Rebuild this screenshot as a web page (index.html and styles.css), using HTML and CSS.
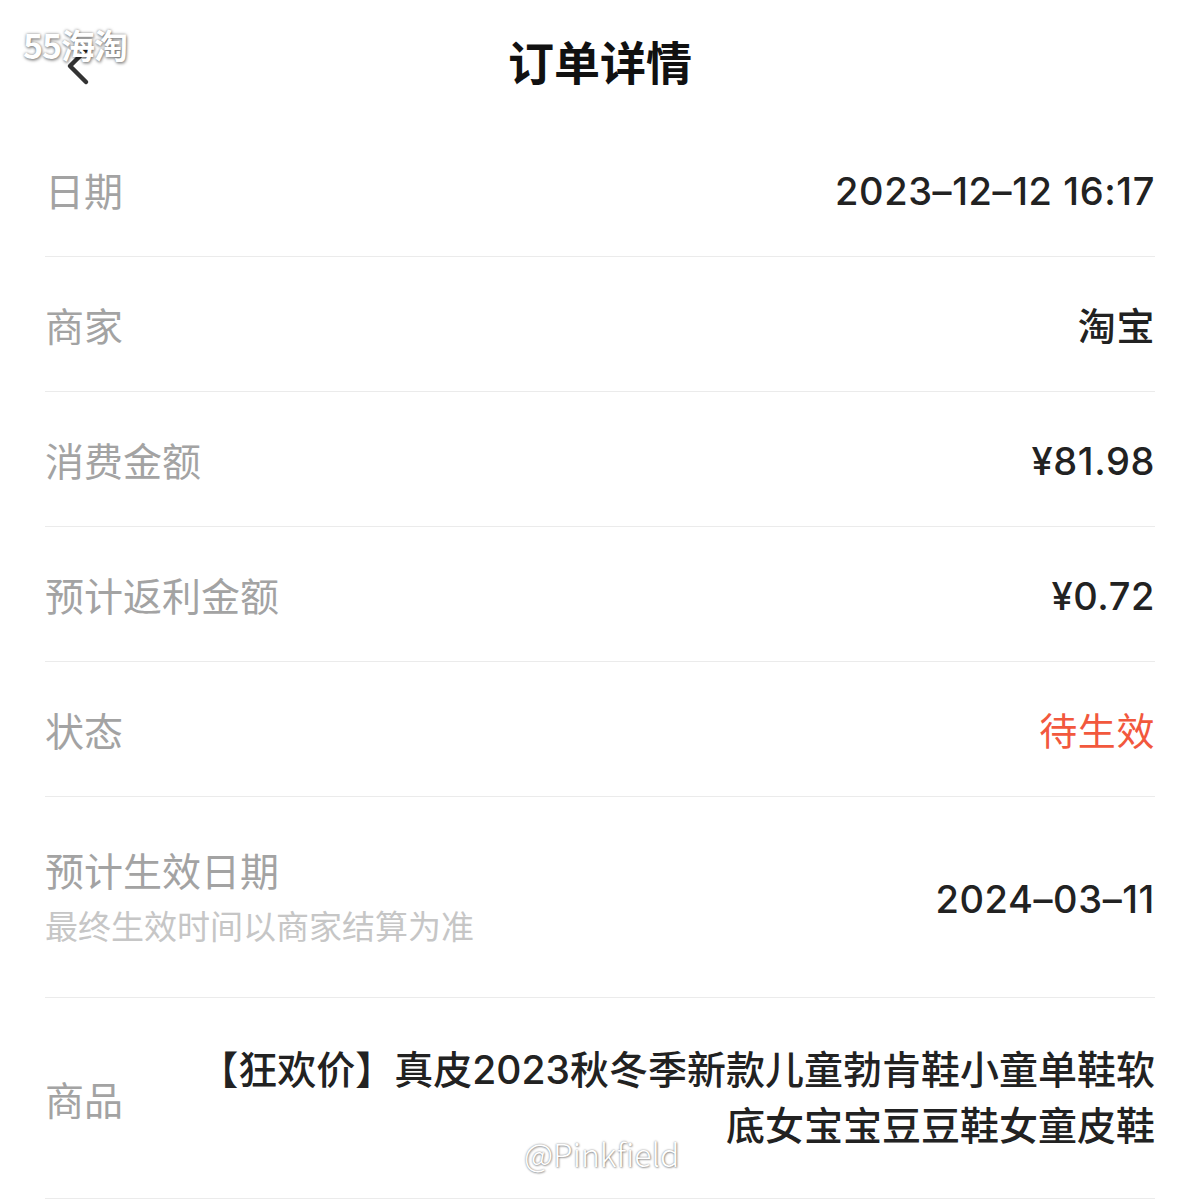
FILE: index.html
```html
<!DOCTYPE html>
<html lang="zh-CN">
<head>
  <meta charset="UTF-8">
  <meta name="viewport" content="width=device-width, initial-scale=1.0">
  <title>订单详情</title>
  <link rel="stylesheet" href="styles.css">
</head>
<body>
  <div class="page">
    <div class="header">
      <span class="back">
        <svg width="40" height="44" viewBox="0 0 40 44">
          <path d="M30 6 L14 22 L30 38" fill="none" stroke="#333" stroke-width="4.5" stroke-linecap="round" stroke-linejoin="round"/>
        </svg>
      </span>
      <h1>订单详情</h1>
      <span class="mark-logo">55海淘</span>
    </div>

    <div class="list">
      <div class="row">
        <span class="label">日期</span>
        <span class="value">2023–12–12 16:17</span>
      </div>
      <div class="row">
        <span class="label">商家</span>
        <span class="value">淘宝</span>
      </div>
      <div class="row">
        <span class="label">消费金额</span>
        <span class="value">¥81.98</span>
      </div>
      <div class="row">
        <span class="label">预计返利金额</span>
        <span class="value">¥0.72</span>
      </div>
      <div class="row">
        <span class="label">状态</span>
        <span class="value pending">待生效</span>
      </div>
      <div class="row tall">
        <div class="label-group">
          <span class="label">预计生效日期</span>
          <span class="sub">最终生效时间以商家结算为准</span>
        </div>
        <span class="value">2024–03–11</span>
      </div>
      <div class="row tall">
        <span class="label">商品</span>
        <span class="value goods">【狂欢价】真皮2023秋冬季新款儿童勃肯鞋小童单鞋软底女宝宝豆豆鞋女童皮鞋</span>
      </div>
    </div>

    <span class="mark-user">@Pinkfield</span>
  </div>
</body>
</html>
```

FILE: styles.css
```css
body {
  margin: 0;
  background: #fff;
  font-family: "Noto Sans CJK SC", "Noto Sans", sans-serif;
  color: #222;
}

.page {
  position: relative;
  width: 1200px;
  height: 1200px;
  overflow: hidden;
}

.header {
  position: relative;
  height: 122px;
  display: flex;
  align-items: center;
  justify-content: center;
}

.header h1 {
  margin: 0;
  font-size: 46px;
  font-weight: 700;
  color: #111;
  line-height: 1;
  padding-bottom: 2px;
}

.back {
  position: absolute;
  left: 56px;
  top: 44px;
}

.mark-logo {
  position: absolute;
  left: 23px;
  top: 20px;
  font-size: 34px;
  font-weight: 700;
  letter-spacing: -1px;
  color: #fff;
  text-shadow: 0 0 3px rgba(0,0,0,0.5), 1px 2px 3px rgba(0,0,0,0.3);
}

.list {
  padding: 0 45px;
}

.row {
  display: flex;
  justify-content: space-between;
  align-items: center;
  height: 134px;
  border-bottom: 1px solid #ebebeb;
}

.row.tall {
  height: auto;
  padding: 44px 0;
}

.label {
  font-size: 39px;
  color: #a3a3a3;
  line-height: 56px;
}

.label-group {
  display: flex;
  flex-direction: column;
}

.sub {
  font-size: 33px;
  color: #c6c6c6;
  line-height: 56px;
}

.value {
  font-family: Inter, "Noto Sans CJK SC", sans-serif;
  font-size: 38px;
  font-weight: 500;
  letter-spacing: 0.6px;
  color: #222;
  line-height: 56px;
  text-align: right;
  padding-top: 4px;
}

.pending {
  color: #f2583d;
  font-weight: 400;
}

.goods {
  width: 960px;
  font-size: 39px;
  letter-spacing: 0;
  padding-top: 0;
}

.mark-user {
  position: absolute;
  left: 524px;
  top: 1130px;
  font-size: 32px;
  font-weight: 300;
  color: #fff;
  text-shadow: 0 0 2px rgba(0,0,0,0.5), 1px 1px 2px rgba(0,0,0,0.3);
}
```
